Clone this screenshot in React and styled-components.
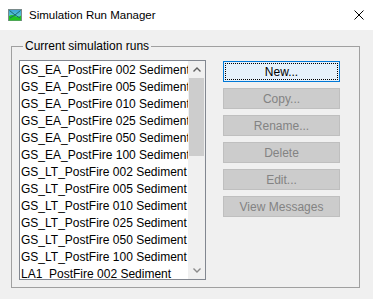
import React from 'react'
import styled, {createGlobalStyle} from 'styled-components'

const runs = [
  'GS_EA_PostFire 002 Sediment',
  'GS_EA_PostFire 005 Sediment',
  'GS_EA_PostFire 010 Sediment',
  'GS_EA_PostFire 025 Sediment',
  'GS_EA_PostFire 050 Sediment',
  'GS_EA_PostFire 100 Sediment',
  'GS_LT_PostFire 002 Sediment',
  'GS_LT_PostFire 005 Sediment',
  'GS_LT_PostFire 010 Sediment',
  'GS_LT_PostFire 025 Sediment',
  'GS_LT_PostFire 050 Sediment',
  'GS_LT_PostFire 100 Sediment',
  'LA1_PostFire 002 Sediment',
]

const buttons = [
  {label: 'New...', focused: true},
  {label: 'Copy...'},
  {label: 'Rename...'},
  {label: 'Delete'},
  {label: 'Edit...'},
  {label: 'View Messages'},
]

const GlobalStyle = createGlobalStyle`
  html, body {
    margin: 0;
    padding: 0;
    background: #f0f0f0;
  }
  * { box-sizing: border-box; }
`

const Window = styled.div`
  width: 373px;
  height: 299px;
  background: #f0f0f0;
  font-family: "Liberation Sans", Arial, sans-serif;
  font-size: 12px;
  color: #000;
  display: flex;
  flex-direction: column;
  overflow: hidden;
`

const TitleBar = styled.div`
  height: 30px;
  background: #fff;
  display: flex;
  align-items: center;
  padding: 0 9px 0 8px;
`

const TitleText = styled.span`
  flex: 1;
  margin-left: 7px;
  font-size: 11.5px;
  color: #000;
`

const Body = styled.div`
  flex: 1;
  padding: 9px 0 0 11px;
`

const Group = styled.fieldset`
  margin: 0;
  width: 349px;
  height: 249px;
  padding: 7px 0 0 7px;
  border: 1px solid #a0a0a0;
  display: flex;
  align-items: flex-start;
`

const Legend = styled.legend`
  margin-left: 4px;
  padding: 0 2px;
  line-height: 14px;
  font-size: 12px;
`

const ListBox = styled.div`
  width: 187px;
  height: 220px;
  border: 1px solid #828790;
  background: #fff;
  display: flex;
`

const Items = styled.div`
  flex: 1;
  overflow: hidden;
  padding: 1px 0 0 1px;
`

const Item = styled.div`
  height: 17px;
  line-height: 17px;
  white-space: nowrap;
`

const ScrollBar = styled.div`
  width: 17px;
  background: #f0f0f0;
  display: flex;
  flex-direction: column;
`

const ArrowCell = styled.div`
  height: 17px;
  display: flex;
  align-items: center;
  justify-content: center;
`

const Track = styled.div`
  flex: 1;
  padding: 0 1px;
`

const Thumb = styled.div`
  height: 78px;
  background: #cdcdcd;
`

const ButtonColumn = styled.div`
  margin: 1px 0 0 17px;
  display: flex;
  flex-direction: column;
  gap: 6px;
`

const Button = styled.button`
  width: 117px;
  height: 21px;
  padding: 0;
  font-family: "Liberation Sans", Arial, sans-serif;
  font-size: 12px;
  border: 1px solid ${p => (p.$focused ? '#0078d7' : '#bfbfbf')};
  background: ${p => (p.$focused ? '#e5f1fb' : '#cccccc')};
  color: ${p => (p.$focused ? '#000' : '#838383')};
  outline: ${p => (p.$focused ? '1px dotted #000' : 'none')};
  outline-offset: -3px;
`

const AppIcon = () => (
  <svg width="14" height="12" viewBox="0 0 14 12">
    <defs>
      <linearGradient id="sky" x1="0" y1="0" x2="0" y2="1">
        <stop offset="0" stopColor="#3aa0d8" />
        <stop offset="1" stopColor="#6fe0d0" />
      </linearGradient>
    </defs>
    <rect x="0.5" y="0.5" width="13" height="11" fill="url(#sky)" stroke="#7a8a8a" />
    <path d="M1 7 Q4 5 7 7 T13 6.5 V11.5 H1 Z" fill="#22c422" />
    <path d="M1.5 1.5 L7 6 L12.5 1.5 M2 9 L7 6 L12 9" stroke="#1a6a6a" strokeWidth="1" fill="none" />
  </svg>
)

const CloseIcon = () => (
  <svg width="10" height="10" viewBox="0 0 10 10">
    <path d="M0.5 0.5 L9.5 9.5 M9.5 0.5 L0.5 9.5" stroke="#000" strokeWidth="1" />
  </svg>
)

const Chevron = ({up, color}) => (
  <svg width="8" height="5" viewBox="0 0 8 5">
    <polyline
      points={up ? '0.5,4.5 4,1 7.5,4.5' : '0.5,0.5 4,4 7.5,0.5'}
      fill="none"
      stroke={color}
      strokeWidth="1.4"
    />
  </svg>
)

export default function App() {
  return (
    <Window>
      <GlobalStyle />
      <TitleBar>
        <AppIcon />
        <TitleText>Simulation Run Manager</TitleText>
        <CloseIcon />
      </TitleBar>
      <Body>
        <Group>
          <Legend>Current simulation runs</Legend>
          <ListBox>
            <Items>
              {runs.map(r => (
                <Item key={r}>{r}</Item>
              ))}
            </Items>
            <ScrollBar>
              <ArrowCell>
                <Chevron up color="#606060" />
              </ArrowCell>
              <Track>
                <Thumb />
              </Track>
              <ArrowCell>
                <Chevron color="#8a8a8a" />
              </ArrowCell>
            </ScrollBar>
          </ListBox>
          <ButtonColumn>
            {buttons.map(b => (
              <Button key={b.label} $focused={b.focused}>
                {b.label}
              </Button>
            ))}
          </ButtonColumn>
        </Group>
      </Body>
    </Window>
  )
}
